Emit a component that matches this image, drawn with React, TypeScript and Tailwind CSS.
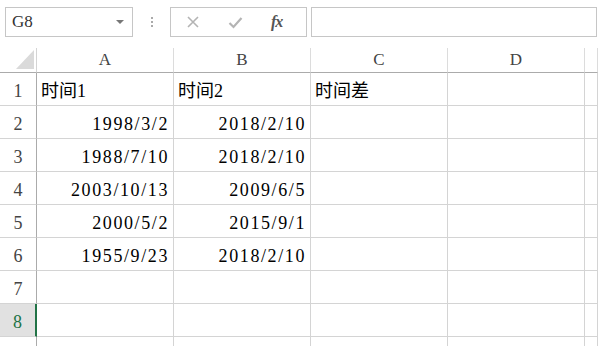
import React from 'react';

const cols = ['A', 'B', 'C', 'D', ''];

const rows: { a?: string; b?: string; c?: string; left?: boolean }[] = [
  { a: '时间1', b: '时间2', c: '时间差', left: true },
  { a: '1998/3/2', b: '2018/2/10' },
  { a: '1988/7/10', b: '2018/2/10' },
  { a: '2003/10/13', b: '2009/6/5' },
  { a: '2000/5/2', b: '2015/9/1' },
  { a: '1955/9/23', b: '2018/2/10' },
  {},
  {},
  {},
];

const font = "font-['Liberation_Serif','Noto_Sans_CJK_SC',serif]";

const Cell: React.FC<{ text?: string; left?: boolean }> = ({ text, left }) => (
  <div
    className={`flex items-end border-r border-b border-[#d4d4d4] pb-[4px] px-[4px] text-[18px] leading-[20px] text-black ${
      left ? 'justify-start tracking-normal' : 'justify-end tracking-[1.6px]'
    }`}
  >
    {text}
  </div>
);

export default function App() {
  return (
    <div className={`w-[598px] h-[346px] overflow-hidden bg-white ${font}`}>
      {/* toolbar: name box + formula bar */}
      <div className="h-[48px] flex items-start pt-[7px] pl-[5px]">
        <div className="w-[128px] h-[30px] border border-[#c6c6c6] flex items-center justify-between pl-[6px] pr-[8px]">
          <span className="text-[17px] text-[#333]">G8</span>
          <span className="w-0 h-0 border-l-[4px] border-r-[4px] border-t-[4px] border-l-transparent border-r-transparent border-t-[#777]" />
        </div>
        <div className="w-[37px] h-[30px] flex flex-col items-center justify-center gap-[2px]">
          <span className="w-[2px] h-[2px] bg-[#aaa]" />
          <span className="w-[2px] h-[2px] bg-[#aaa]" />
          <span className="w-[2px] h-[2px] bg-[#aaa]" />
        </div>
        <div className="w-[137px] h-[30px] border border-[#c6c6c6] flex items-center pl-[15px] gap-[28px]">
          <svg width="14" height="14" viewBox="0 0 14 14">
            <path d="M2 2 L12 12 M12 2 L2 12" stroke="#b4b4b4" strokeWidth="1.6" fill="none" />
          </svg>
          <svg width="15" height="13" viewBox="0 0 15 13">
            <path d="M1.5 7 L5.5 11 L13.5 2" stroke="#b4b4b4" strokeWidth="2.2" fill="none" />
          </svg>
          <span className="italic font-bold text-[16px] text-[#555] tracking-[-1px]">fx</span>
        </div>
        <div className="ml-[4px] flex-1 h-[30px] border border-[#c6c6c6] mr-[1px]" />
      </div>

      {/* sheet grid */}
      <div className="grid grid-cols-[37px_137px_137px_137px_137px_1fr] grid-rows-[25px_repeat(9,33px)]">
        {/* corner */}
        <div className="relative border-r border-b border-r-[#d4d4d4] border-b-[#ababab]">
          <svg className="absolute left-[16px] top-[2px]" width="18" height="19" viewBox="0 0 18 19">
            <path d="M18 0 L18 19 L0 19 Z" fill="#dadada" />
          </svg>
        </div>
        {cols.map((c, i) => (
          <div
            key={i}
            className="flex items-end justify-center pb-[2px] border-r border-b border-r-[#dcdcdc] border-b-[#ababab] text-[17px] leading-[20px] text-[#444]"
          >
            {c}
          </div>
        ))}

        {rows.map((r, i) => (
          <React.Fragment key={i}>
            <div
              className={`flex items-end justify-center pb-[4px] border-b border-r text-[18px] leading-[20px] ${
                i === 7
                  ? 'bg-[#e1e1e1] text-[#217346] border-r-2 border-r-[#217346] border-b-[#d4d4d4]'
                  : 'text-[#444] border-r-[#ababab] border-b-[#d4d4d4]'
              }`}
            >
              {i < 8 ? i + 1 : ''}
            </div>
            <Cell text={r.a} left={r.left} />
            <Cell text={r.b} left={r.left} />
            <Cell text={r.c} left={r.left} />
            <Cell />
            <Cell />
          </React.Fragment>
        ))}
      </div>
    </div>
  );
}
